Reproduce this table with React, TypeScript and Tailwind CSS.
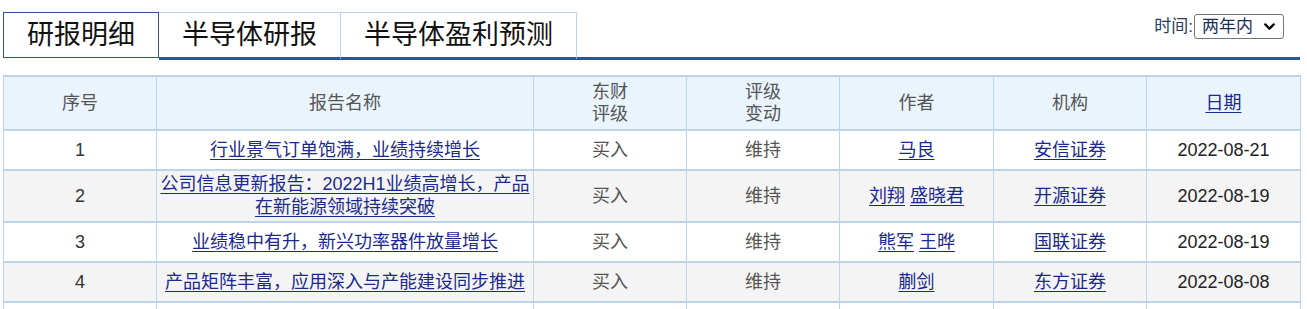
import { ChevronDown } from "lucide-react"

type Row = {
  no: number
  title: string
  rating: string
  change: string
  authors: string[]
  org: string
  date: string
}

const rows: Row[] = [
  { no: 1, title: "行业景气订单饱满，业绩持续增长", rating: "买入", change: "维持", authors: ["马良"], org: "安信证券", date: "2022-08-21" },
  { no: 2, title: "公司信息更新报告：2022H1业绩高增长，产品在新能源领域持续突破", rating: "买入", change: "维持", authors: ["刘翔", "盛晓君"], org: "开源证券", date: "2022-08-19" },
  { no: 3, title: "业绩稳中有升，新兴功率器件放量增长", rating: "买入", change: "维持", authors: ["熊军", "王晔"], org: "国联证券", date: "2022-08-19" },
  { no: 4, title: "产品矩阵丰富，应用深入与产能建设同步推进", rating: "买入", change: "维持", authors: ["蒯剑"], org: "东方证券", date: "2022-08-08" },
]

const font = "font-['Liberation_Sans','Noto_Sans_CJK_SC',sans-serif]"
const cell = "border-x border-y-2 border-[#bdd5ea] text-center align-middle p-0"
const link = "text-[#1b2a8c] underline underline-offset-[3px] decoration-[#1b2a8c]"

function Tabs() {
  return (
    <div className="flex items-start">
      <div className="w-[156px] h-[46px] border border-[#2f5597] flex items-center justify-center text-[27px] text-[#111]">
        研报明细
      </div>
      <div className="w-[182px] h-[48px] border-t border-r border-t-[#b9d3ea] border-r-[#b9d3ea] border-b-[3px] border-b-[#2b5797] flex items-center justify-center text-[27px] text-[#111]">
        半导体研报
      </div>
      <div className="w-[236px] h-[48px] border-t border-r border-t-[#b9d3ea] border-r-[#b9d3ea] border-b-[3px] border-b-[#2b5797] flex items-center justify-center text-[27px] text-[#111]">
        半导体盈利预测
      </div>
      <div className="flex-1 h-[48px] border-b-[3px] border-[#2b5797] flex justify-end items-start pt-[2px] pr-[16px]">
        <div className="flex items-center text-[17px]">
          <span className="text-[#2a3b5c]">时间:</span>
          <div className="ml-[1px] w-[90px] h-[25px] border border-[#767676] rounded-[3px] flex items-center justify-between pl-[7px] pr-[5px] text-[#1e2f55]">
            <span>两年内</span>
            <ChevronDown className="w-[17px] h-[17px] text-black" strokeWidth={3} />
          </div>
        </div>
      </div>
    </div>
  )
}

export default function App() {
  return (
    <div className={`${font} bg-white w-[1307px] h-[309px] overflow-hidden pl-[3px] pr-[7px] pt-[12px]`}>
      <Tabs />
      <table className="mt-[15px] w-[1297px] border-collapse table-fixed text-[18px]">
        <colgroup>
          <col className="w-[153px]" />
          <col className="w-[377px]" />
          <col className="w-[153px]" />
          <col className="w-[153px]" />
          <col className="w-[154px]" />
          <col className="w-[153px]" />
          <col className="w-[154px]" />
        </colgroup>
        <thead>
          <tr className="bg-[#eaf4fd] h-[54px] text-[#555] leading-[22px]">
            <th className={`${cell} font-normal`}>序号</th>
            <th className={`${cell} font-normal`}>报告名称</th>
            <th className={`${cell} font-normal`}>东财<br />评级</th>
            <th className={`${cell} font-normal`}>评级<br />变动</th>
            <th className={`${cell} font-normal`}>作者</th>
            <th className={`${cell} font-normal`}>机构</th>
            <th className={`${cell} font-normal`}><span className={link}>日期</span></th>
          </tr>
        </thead>
        <tbody>
          {rows.map((r, i) => (
            <tr key={r.no} className={`${i % 2 === 1 ? "bg-[#f4f4f4]" : "bg-white"} ${r.no === 2 ? "h-[52px]" : "h-[40px]"} leading-[23px]`}>
              <td className={`${cell} text-[#333]`}>{r.no}</td>
              <td className={`${cell} px-[3px]`}><span className={link}>{r.title}</span></td>
              <td className={`${cell} text-[#555]`}>{r.rating}</td>
              <td className={`${cell} text-[#555]`}>{r.change}</td>
              <td className={cell}>
                {r.authors.map((a, j) => (
                  <span key={a}>
                    {j > 0 && " "}
                    <span className={link}>{a}</span>
                  </span>
                ))}
              </td>
              <td className={cell}><span className={link}>{r.org}</span></td>
              <td className={`${cell} text-[#222]`}>{r.date}</td>
            </tr>
          ))}
          <tr className="bg-white h-[40px]">
            <td className={cell}></td>
            <td className={cell}></td>
            <td className={cell}></td>
            <td className={cell}></td>
            <td className={cell}></td>
            <td className={cell}></td>
            <td className={cell}></td>
          </tr>
        </tbody>
      </table>
    </div>
  )
}
